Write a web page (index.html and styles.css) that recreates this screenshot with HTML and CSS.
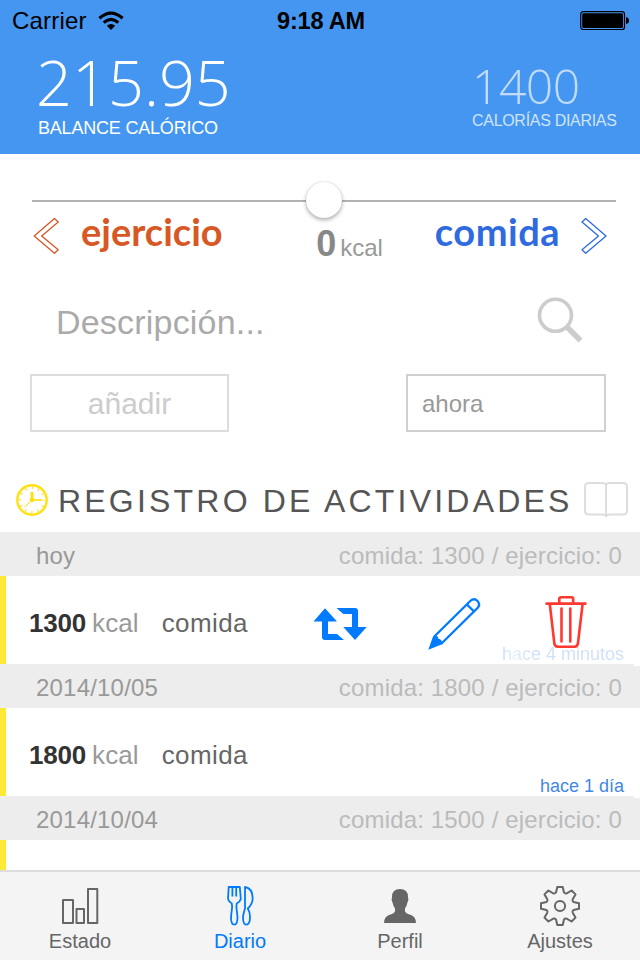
FILE: index.html
```
<!DOCTYPE html>
<html lang="es">
<head>
<meta charset="utf-8">
<title>Diario</title>
<link rel="stylesheet" href="styles.css">
</head>
<body>
<div class="app">
  <header class="header">
    <div class="status">
      <div class="carrier"><span>Carrier</span>
        <svg width="26" height="20" viewBox="0 0 26 20"><g fill="none" stroke="#000" stroke-width="3.2"><path d="M1.4 7.2Q13-3 24.6 7.2"/><path d="M5.7 11.6Q13 5.2 20.3 11.6"/></g><path d="M8.800 14.800Q13 11.200 17.200 14.800L13 19z"/></svg>
      </div>
      <div class="time">9:18 AM</div>
      <svg class="battery" width="50" height="20" viewBox="0 0 50 20"><rect x=".7" y=".7" width="43.800" height="17.800" rx="2.600" fill="none" stroke="#000" stroke-width="1.200"/><rect x="2.200" y="2.200" width="40.800" height="14.800" rx="1.500"/><path d="M46 6Q49 6.500 49 9.500Q49 12.500 46 13z"/></svg>
    </div>
    <div class="totals">
      <div class="balance"><div class="balance-value">215.95</div><div class="balance-label">BALANCE CALÓRICO</div></div>
      <div class="daily"><div class="daily-value">1400</div><div class="daily-label">CALORÍAS DIARIAS</div></div>
    </div>
  </header>

  <main class="entry">
    <div class="track"><div class="thumb"></div></div>
    <div class="kinds">
      <div class="kind exercise">
        <svg width="28" height="38" viewBox="32 217 28 38"><path d="M34.200 236L54.500 218.500L58.200 222L41.700 236L58.200 249.700L54.500 253.300Z" fill="none" stroke="currentColor" stroke-width="1.3" stroke-linejoin="round"/></svg>
        <span>ejercicio</span>
      </div>
      <div class="amount"><b>0</b><span>kcal</span></div>
      <div class="kind food">
        <span>comida</span>
        <svg width="28" height="38" viewBox="580 217 28 38"><path d="M606 236L585.700 218.500L582 222L598.500 236L582 249.700L585.700 253.300Z" fill="none" stroke="currentColor" stroke-width="1.3" stroke-linejoin="round"/></svg>
      </div>
    </div>
    <div class="description">
      <span>Descripción...</span>
      <svg width="48" height="48" viewBox="536 296 48 48"><g fill="none" stroke="#ccc"><circle cx="555.500" cy="315.300" r="16" stroke-width="3.600"/><path d="M566.500 326.500L580.500 340.500" stroke-width="5.500"/></g></svg>
    </div>
    <div class="actions"><div class="add">añadir</div><div class="when">ahora</div></div>
  </main>

  <div class="log-title">
    <svg width="34" height="34" viewBox="-17 -17 34 34"><g fill="none" stroke="#ffe012"><circle r="14.700" stroke-width="2.400"/><circle r="12.200" stroke-width="2.400" stroke-dasharray="1.200 5.188" stroke-dashoffset=".6"/><path d="M0-8V0" stroke-width="3"/><path d="M0 0H10" stroke-width="1.700"/><path d="M-1 1L-7 7" stroke-width="1.500" stroke-dasharray="1.500 1"/></g><circle r="2.300" fill="#ffe012"/></svg>
    <h1>REGISTRO DE ACTIVIDADES</h1>
    <svg class="book" width="46" height="38" viewBox="583 481 46 38"><path d="M606 484.500Q605 483 602 483H589Q585 483 585 487V511Q585 514.500 589 514.500H602Q606 514.500 606 517Q606 514.500 610 514.500H623Q627 514.500 627 511V487Q627 483 623 483H610Q607 483 606 484.500V517" fill="none" stroke="#ddd" stroke-width="2"/></svg>
  </div>

  <section class="log">
    <div class="day"><span>hoy</span><span class="sum">comida: 1300 / ejercicio: 0</span></div>
    <div class="row">
      <b>1300</b><span class="unit">kcal</span><span class="what">comida</span>
      <span class="ago fading">hace 4 minutos</span>
      <svg class="tools" width="280" height="60" viewBox="310 592 280 60">
        <g fill="#007aff"><path d="M325 608.300L313.500 621.500H322V637Q322 640 325 640H344L337 634H328V621.500H337Z"/><path d="M336.500 608H355Q358 608 358 611V627H366.700L355 640L343.300 627H352V614H343.300Z"/></g>
        <g fill="none" stroke="#007aff" stroke-width="2.300" stroke-linejoin="round"><path d="M433.800 637L470.300 601Q474 597.500 477.500 601Q480.800 604.500 477.300 608.200L441 644"/><path d="M467 604.500L474 611.500M433.800 637Q437.500 636 437.500 640Q441.500 640 441 644"/></g>
        <path d="M428.300 649.700L433 636.500Q437.500 636.500 437.500 640Q441.500 640.500 441.500 644.500Z" fill="#007aff"/>
        <g fill="none" stroke="#ff3830" stroke-width="2.600" stroke-linecap="round" stroke-linejoin="round"><path d="M546.500 603.600H585.500M559.300 603V599Q559.300 597.300 561 597.300H571.500Q573.200 597.300 573.200 599V603M549.800 604L554.300 643Q554.700 646.700 558 646.700H574.500Q577.500 646.700 578 643L582.600 604M561.500 608.500V641.500M570.300 608.500V641.500"/></g>
      </svg>
    </div>
    <div class="day"><span>2014/10/05</span><span class="sum">comida: 1800 / ejercicio: 0</span></div>
    <div class="row"><b>1800</b><span class="unit">kcal</span><span class="what">comida</span><span class="ago">hace 1 día</span></div>
    <div class="day"><span>2014/10/04</span><span class="sum">comida: 1500 / ejercicio: 0</span></div>
    <div class="row partial"></div>
  </section>

  <nav class="tabs">
    <div class="tab"><svg width="44" height="44" viewBox="58 884 44 44"><g fill="none" stroke="#666" stroke-width="2" stroke-linejoin="round"><path d="M63 900H73V923H63ZM76.500 909H84V923H76.500ZM88 889H97.300V923H88Z"/></g></svg><span>Estado</span></div>
    <div class="tab active"><svg width="44" height="44" viewBox="218 884 44 44"><g fill="none" stroke="#007aff" stroke-width="1.800" stroke-linejoin="round"><path d="M228.700 887L228 899Q229 902 231.800 903.500C233 908 231 912 231 918Q231.200 924.700 234.300 924.700Q237.300 924.700 237.500 918C237.500 912 235.500 908 236.700 903.500Q240 902 240.800 899L239.800 887ZM232.400 887V896.500M236.200 887V896.500"/><path d="M245 887V905C246 909 243 912 243 918Q243.300 924.700 246.300 924.700Q250 924.700 250 917Q250 912 247.800 908.500Q252.700 904 252.700 898Q252.300 888 245 887Z"/></g></svg><span>Diario</span></div>
    <div class="tab"><svg width="44" height="44" viewBox="378 884 44 44"><path d="M400 889Q408 889 408 897Q409 899 407.300 903Q406.500 907 405 908.500V911.500Q406 913.500 411 915Q416 917 416 923H384Q384 917 389 915Q394 913.500 395 911.500V908.500Q393.500 907 392.700 903Q391 899 392 897Q392 889 400 889Z" fill="#666"/></svg><span>Perfil</span></div>
    <div class="tab"><svg width="44" height="44" viewBox="-22 -22 44 44"><g fill="none" stroke="#666" stroke-width="2" stroke-linejoin="round"><path d="M-2.700-19H2.700L4-13.500Q5.200-12 6.700-12.700L11.600-15.500L15.500-11.600L12.700-6.700Q12-5.200 13.500-4L19-2.700V2.700L13.500 4Q12 5.200 12.700 6.700L15.500 11.600L11.600 15.500L6.700 12.700Q5.200 12 4 13.500L2.700 19H-2.700L-4 13.500Q-5.200 12-6.700 12.700L-11.600 15.500L-15.500 11.600L-12.700 6.700Q-12 5.200-13.500 4L-19 2.700V-2.700L-13.500-4Q-12-5.200-12.700-6.700L-15.500-11.600L-11.600-15.500L-6.700-12.700Q-5.200-12-4-13.500Z"/><circle r="5.100"/></g></svg><span>Ajustes</span></div>
  </nav>
</div>
</body>
</html>
```
FILE: styles.css
```
* { box-sizing: border-box; }
body { margin: 0; font-family: "Liberation Sans", Arial, sans-serif; background: #fff; }
svg { display: block; flex: none; }
.app { width: 640px; height: 960px; display: flex; flex-direction: column; overflow: hidden; white-space: nowrap; }

.header { height: 154px; flex: none; background: #4596f1; color: #fff; }
.status { height: 40px; padding: 0 10px 0 12px; display: grid; grid-template-columns: 1fr auto 1fr; align-items: center; color: #000; font-size: 24px; line-height: 40px; }
.carrier { display: flex; align-items: center; gap: 11px; letter-spacing: .2px; padding-top: 1px; }
.time { font-weight: 700; font-size: 23.5px; letter-spacing: -.2px; padding-top: 1px; }
.battery { justify-self: end; }
.totals { display: flex; justify-content: space-between; padding: 12px 20px 0 36px; }
.balance-value { font: 300 63px/60px "Open Sans", sans-serif; padding-bottom: 4px; }
.balance-label { font-size: 18px; line-height: 24px; letter-spacing: -.2px; padding-left: 2px; }
.daily { padding-top: 12px; color: #cfe3fb; width: 148px; }
.daily-value { font: 300 48px/43px "Open Sans", sans-serif; padding-bottom: 5px; letter-spacing: -.5px; opacity: .9; }
.daily-label { font-size: 16px; line-height: 18px; letter-spacing: -.3px; }

.entry { height: 316px; flex: none; padding: 46px 24px 0 30px; }
.track { position: relative; height: 2px; margin-left: 2px; background: #b2b2b2; }
.thumb { position: absolute; left: 274px; top: -18px; width: 36px; height: 36px; border-radius: 50%; background: #fff; box-shadow: 0 2px 4px rgba(0,0,0,.32), 0 0 1px rgba(0,0,0,.2); }
.kinds { height: 80px; display: grid; grid-template-columns: 226px 1fr 190px; padding: 0 8px 0 2px; }
.kind { display: flex; align-items: flex-start; padding-top: 15px; font: 700 38px/38px Lato, sans-serif; }
.kind span { margin-top: -5px; }
.exercise { color: #d75825; gap: 21px; }
.food { color: #2f6bdf; justify-content: flex-end; gap: 20px; letter-spacing: .5px; }
.amount { display: flex; align-items: baseline; justify-content: center; gap: 4px; color: #888; padding: 21px 0 0 23px; line-height: 42px; }
.amount b { font-size: 36px; }
.amount span { font-size: 24px; color: #999; }
.description { height: 88px; display: flex; justify-content: space-between; align-items: flex-start; padding: 14px 32px 0 26px; color: #aaa; font-size: 34px; line-height: 52px; letter-spacing: .2px; }
.actions { display: flex; justify-content: space-between; padding-right: 10px; margin-top: 4px; line-height: 56px; }
.add, .when { height: 58px; border: 2px solid #ddd; }
.add { width: 199px; text-align: center; font-size: 30px; color: #ccc; }
.when { width: 200px; border-color: #d0d0d0; padding-left: 14px; font-size: 24px; color: #999; }

.log-title { height: 62px; flex: none; display: flex; align-items: center; padding: 0 11px 2px 15px; }
.log-title h1 { margin: 0 0 0 9px; flex: 1; width: 0; font-size: 32px; font-weight: 400; letter-spacing: 3.2px; color: #555; line-height: 62px; padding-top: 2px; }
.day { height: 44px; display: flex; justify-content: space-between; background: #ededed; color: #999; font-size: 24px; line-height: 44px; padding: 2px 18px 0 36px; letter-spacing: .2px; }
.sum { color: #bbb; letter-spacing: .16px; }
.row { position: relative; height: 88px; border-left: 6px solid #ffe937; display: flex; align-items: baseline; padding-left: 23px; font-size: 26px; line-height: 94px; }
.row b { color: #333; letter-spacing: -.2px; }
.unit { color: #999; margin-left: 6px; letter-spacing: .1px; }
.what { color: #666; margin-left: 23px; letter-spacing: .4px; }
.row::after { content: ""; position: absolute; right: 0; bottom: -2px; width: 6px; height: 2px; background: #fff; }
.ago { position: absolute; right: 16px; bottom: 0; font-size: 18px; line-height: 20px; color: #4388e4; }
.fading { background: linear-gradient(90deg, #cfe0f8 4px, #eaf2fc 11px, #d8e6f9 20px, #cfe0f8 34px); color: transparent; -webkit-background-clip: text; background-clip: text; }
.tools { position: absolute; left: 304px; top: 16px; }
.partial { height: 30px; }
.partial::after { display: none; }

.tabs { height: 90px; flex: none; display: grid; grid-template-columns: repeat(4, 1fr); background: #f4f4f4; border-top: 2px solid #ddd; color: #666; }
.tab { display: flex; flex-direction: column; align-items: center; padding-top: 12px; font-size: 20px; line-height: 26px; }
.active { color: #007aff; }
```
